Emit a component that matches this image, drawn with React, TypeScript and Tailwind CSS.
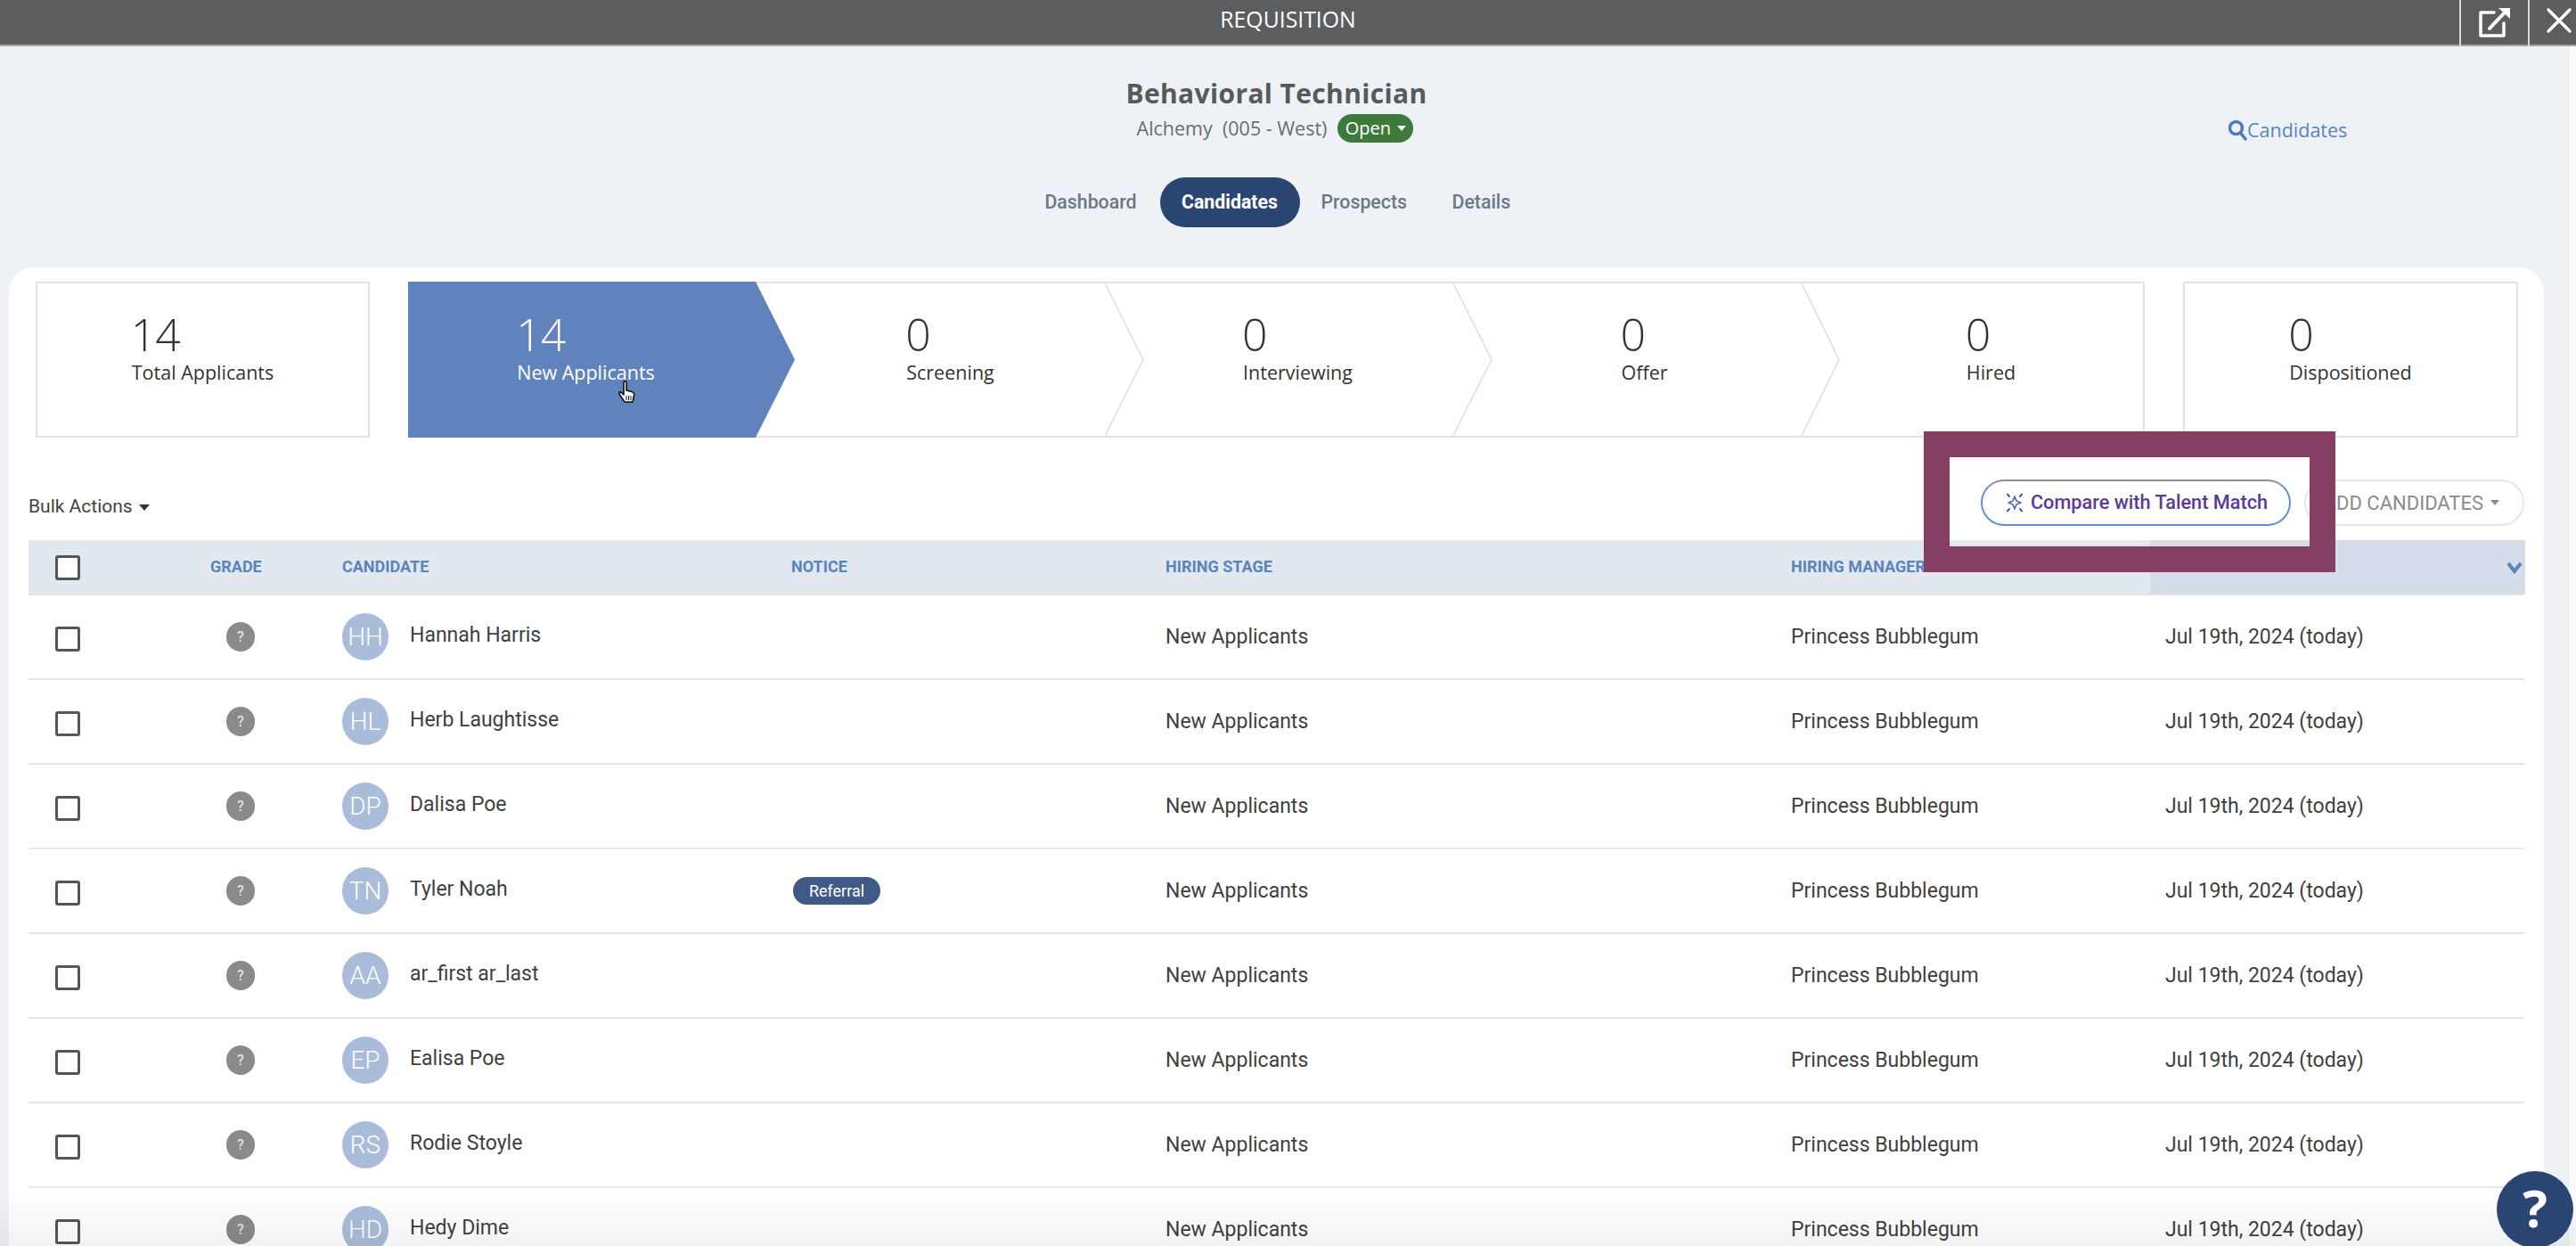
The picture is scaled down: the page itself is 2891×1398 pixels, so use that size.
import React from "react";

const OPEN = "font-['Open_Sans','Liberation_Sans',sans-serif]";
const ROBOTO = "font-['Roboto','Liberation_Sans',sans-serif]";

const rows = [
  { i: "HH", name: "Hannah Harris" },
  { i: "HL", name: "Herb Laughtisse" },
  { i: "DP", name: "Dalisa Poe" },
  { i: "TN", name: "Tyler Noah", notice: "Referral" },
  { i: "AA", name: "ar_first ar_last" },
  { i: "EP", name: "Ealisa Poe" },
  { i: "RS", name: "Rodie Stoyle" },
  { i: "HD", name: "Hedy Dime" },
];

const stages = [
  { n: "14", label: "New Applicants", pad: "pl-[6px]", color: "text-white" },
  { n: "0", label: "Screening", pad: "pl-[46px]", color: "text-[#333]" },
  { n: "0", label: "Interviewing", pad: "pl-[48px]", color: "text-[#333]" },
  { n: "0", label: "Offer", pad: "pl-[48px]", color: "text-[#333]" },
  { n: "0", label: "Hired", pad: "pl-[48px]", color: "text-[#333]" },
];

const GRID = "grid grid-cols-[204px_148px_504px_420px_702px_403px_421px]";

function Stat({ n, label, color = "text-[#333]" }: { n: string; label: string; color?: string }) {
  return (
    <div className={`inline-flex flex-col items-start pt-[32px] ${OPEN} ${color}`}>
      <span className="text-[50px] leading-[50px] font-light tracking-[-1px] -ml-[1px]">{n}</span>
      <span className="text-[21.5px] leading-[32px] mt-[2px] whitespace-nowrap">{label}</span>
    </div>
  );
}

function Checkbox() {
  return <div className="w-[28px] h-[28px] rounded-[3px] border-[3px] border-[#555] bg-white" />;
}

function Sparkle() {
  return (
    <svg width="24" height="24" viewBox="0 0 24 24" fill="none" className="shrink-0">
      <path d="M12 5 L14 10 L19 12 L14 14 L12 19 L10 14 L5 12 L10 10 Z" stroke="#4f6fb8" strokeWidth="1.8" strokeLinejoin="round" />
      <path d="M4 2.5 L6 5 M20 2.5 L18 5 M4 21.5 L6 19 M20 21.5 L18 19" stroke="#4a3a8f" strokeWidth="2" strokeLinecap="round" />
    </svg>
  );
}

export default function App() {
  return (
    <div className="relative w-[2891px] h-[1398px] overflow-hidden bg-[#eef2f6]">
      {/* Top bar */}
      <div className="relative h-[52px] bg-[#5c5d5f] border-b-2 border-[#a3a4a6] flex items-center justify-center">
        <span className={`${OPEN} text-[24.8px] text-white -mt-[6px]`}>REQUISITION</span>
        <div className="absolute right-0 top-0 h-[52px] flex">
          <div className="w-[77px] h-[52px] border-l-2 border-[#d8d8d8] flex items-center justify-center">
            <svg width="42" height="40" viewBox="0 0 42 40" fill="none" className="-mt-[3px]">
              <path d="M20 9 H5 V35 H31 V21" stroke="white" strokeWidth="3.5" strokeLinejoin="round" strokeLinecap="round" />
              <path d="M15 27 L32 9" stroke="white" strokeWidth="4" strokeLinecap="round" />
              <path d="M25 4 L38 4 L38 16 Z" fill="white" />
            </svg>
          </div>
          <div className="w-[54px] h-[52px] border-l-2 border-[#d8d8d8] flex items-center pl-[18px]">
            <svg width="30" height="30" viewBox="0 0 30 30" fill="none" className="-mt-[6px]">
              <path d="M3 3 L27 27 M27 3 L3 27" stroke="white" strokeWidth="3.5" strokeLinecap="round" />
            </svg>
          </div>
        </div>
      </div>

      <div className="flex h-[1346px]">
        {/* Main column */}
        <div className="w-[2865px] shrink-0 flex flex-col">
          {/* Heading */}
          <div className="relative h-[248px] flex flex-col items-center">
            <h1 className={`${OPEN} text-[30px] leading-[40px] font-bold text-[#58595b] mt-[33px] tracking-[0.35px]`}>Behavioral Technician</h1>
            <div className="flex items-center mt-[3px] h-[32px] -ml-[3px]">
              <span className={`${OPEN} text-[21.5px] text-[#6b6d70] whitespace-pre`}>Alchemy  (005 - West)</span>
              <span className={`${OPEN} ml-[12px] h-[32px] w-[85px] rounded-full bg-[#3f7a3d] text-white text-[20px] flex items-center justify-center gap-[7px]`}>
                Open
                <span className="w-0 h-0 border-x-[5px] border-x-transparent border-t-[6px] border-t-white" />
              </span>
            </div>
            <div className={`${ROBOTO} flex items-center mt-[39px] text-[21.3px] font-medium text-[#6a7887]`}>
              <span className="w-[131px] pr-[26px] text-right">Dashboard</span>
              <span className="w-[157px] h-[56px] rounded-full bg-[#2b4573] text-white font-bold flex items-center justify-center">Candidates</span>
              <span className="w-[122px] pl-[24px]">Prospects</span>
              <span className="ml-[49px] w-[65px]">Details</span>
            </div>
            <div className={`${OPEN} absolute left-[2500px] top-[78px] flex items-center text-[21.5px] text-[#5b84bd]`}>
              <svg width="22" height="24" viewBox="0 0 22 24" fill="none">
                <circle cx="9.5" cy="9.5" r="7" stroke="#4f7ab8" strokeWidth="3.5" />
                <path d="M14.5 15 L20 22" stroke="#4f7ab8" strokeWidth="3.5" strokeLinecap="round" />
              </svg>
              <span>Candidates</span>
            </div>
          </div>

          {/* Card */}
          <div className="ml-[10px] mr-[10px] flex-1 bg-white rounded-t-[28px] px-[22px] pt-[16px] overflow-hidden">
            {/* Stage row */}
            <div className="mx-[8px] flex gap-[43px] h-[175px]">
              <div className="w-[375px] border-2 border-[#e1e3e6] flex justify-center shrink-0">
                <Stat n="14" label="Total Applicants" />
              </div>
              <div className="relative w-[1949px] shrink-0 border-2 border-[#e1e3e6] flex">
                <div className="absolute -left-[2px] -top-[2px] w-[434px] h-[175px] bg-[#6083bd] [clip-path:polygon(0_0,390px_0,434px_50%,390px_100%,0_100%)]" />
                <svg className="absolute -left-[2px] -top-[2px]" width="1949" height="175" fill="none">
                  <path d="M781 0 L825 87.5 L781 175" stroke="#e3e5e8" strokeWidth="2" />
                  <path d="M1172 0 L1216 87.5 L1172 175" stroke="#e3e5e8" strokeWidth="2" />
                  <path d="M1563 0 L1606 87.5 L1563 175" stroke="#e3e5e8" strokeWidth="2" />
                </svg>
                {stages.map((s) => (
                  <div key={s.label} className={`relative w-[389px] flex justify-center ${s.pad}`}>
                    <Stat n={s.n} label={s.label} color={s.color} />
                  </div>
                ))}
                <svg className="absolute left-[232px] top-[109px]" width="24" height="26" viewBox="0 0 24 26">
                  <path d="M8 2 C8 0.5 11 0.5 11 2 V11 L17 12.5 C19.5 13.2 20 14.5 19.5 17 L18 24 H9 L3 15 C2 13 4 12 6 14 L8 16 Z" fill="white" stroke="#111" strokeWidth="1.6" strokeLinejoin="round" />
                  <path d="M11 17 V22 M13.5 17 V22 M16 17 V22" stroke="#111" strokeWidth="1" />
                </svg>
              </div>
              <div className="w-[376px] border-2 border-[#e1e3e6] flex justify-center shrink-0">
                <Stat n="0" label="Dispositioned" />
              </div>
            </div>

            {/* Actions row */}
            <div className="mt-[47px] h-[52px] flex items-center justify-between">
              <div className={`${ROBOTO} flex items-center gap-[7px] text-[21px] text-[#444] mt-[10px]`}>
                Bulk Actions
                <span className="w-0 h-0 border-x-[6px] border-x-transparent border-t-[7px] border-t-[#333]" />
              </div>
              <div className="flex items-center gap-[15px]">
                <div className={`${ROBOTO} w-[348px] h-[52px] rounded-full border-2 border-[#5f8fd6] border-t-[#8d8d92] flex items-center justify-center gap-[6px] text-[21.7px] font-medium text-[#5a3a98]`}>
                  <Sparkle />
                  Compare with Talent Match
                </div>
                <div className={`${ROBOTO} w-[247px] h-[52px] rounded-full border-2 border-[#e6e6e6] flex items-center justify-end pr-[26px] gap-[8px] text-[22px] text-[#8a8a8a]`}>
                  ADD CANDIDATES
                  <span className="w-0 h-0 border-x-[5px] border-x-transparent border-t-[6px] border-t-[#8a8a8a]" />
                </div>
              </div>
            </div>

            {/* Table */}
            <div className="mt-[16px]">
              <div className={`${GRID} ${ROBOTO} h-[62px] bg-[#e2e8ef] border-b-2 border-[#dfe3e8] items-center text-[18px] font-bold text-[#5b84bd]`}>
                <div className="pl-[30px] mt-[1px]"><Checkbox /></div>
                <div className="-mt-[2px]">GRADE</div>
                <div className="-mt-[2px]">CANDIDATE</div>
                <div className="-mt-[2px]">NOTICE</div>
                <div className="-mt-[2px]">HIRING STAGE</div>
                <div className="-mt-[2px]">HIRING MANAGER</div>
                <div className="h-[60px] bg-[#d5dcea] relative flex items-center pl-[17px]">
                  <span className="-mt-[2px]">LAST ACTION</span>
                  <svg className="absolute right-[3px] top-[24px]" width="18" height="14" viewBox="0 0 18 14" fill="none">
                    <path d="M2 2 L9 11 L16 2" stroke="#5b84bd" strokeWidth="4" />
                  </svg>
                </div>
              </div>
              {rows.map((r) => (
                <div key={r.i} className={`${GRID} ${ROBOTO} h-[95px] border-b-2 border-[#e4e5e7] items-center text-[23px] text-[#3f3f3f]`}>
                  <div className="pl-[30px] mt-[4px]"><Checkbox /></div>
                  <div className="pl-[18px]">
                    <div className="w-[32px] h-[33px] rounded-full bg-[#8a8a8a] text-white/75 text-[16px] font-medium flex items-center justify-center">?</div>
                  </div>
                  <div className="flex items-center">
                    <div className="w-[52px] h-[53px] rounded-full bg-[#a9bdda] text-white text-[28px] font-light flex items-center justify-center">{r.i}</div>
                    <span className="ml-[24px] -mt-[3px]">{r.name}</span>
                  </div>
                  <div>
                    {r.notice && (
                      <span className="w-[98px] h-[31px] ml-[2px] rounded-full bg-[#3f5b85] text-white text-[18px] flex items-center justify-center">{r.notice}</span>
                    )}
                  </div>
                  <div className="mt-[1px]">New Applicants</div>
                  <div className="mt-[1px]">Princess Bubblegum</div>
                  <div className="pl-[17px] mt-[1px]">Jul 19th, 2024 (today)</div>
                </div>
              ))}
            </div>
          </div>
        </div>
        {/* Scroll gutter */}
        <div className="flex-1 flex justify-end">
          <div className="w-[9px] bg-[#fafafa] border-l border-[#e4e4e4]" />
        </div>
      </div>

      {/* Annotation box */}
      <div className="absolute left-[2159px] top-[484px] w-[462px] h-[158px] border-[29px] border-[#843f63]" />

      {/* Bottom fade */}
      <div className="absolute left-0 right-0 bottom-0 h-[60px] bg-gradient-to-b from-transparent to-black/5 pointer-events-none" />

      {/* Help */}
      <div className="absolute left-[2802px] top-[1314px] w-[86px] h-[86px] rounded-full bg-[#2b4573] flex items-center justify-center">
        <span className={`${OPEN} text-white text-[58px] font-bold leading-none -mt-[4px]`}>?</span>
      </div>
    </div>
  );
}
